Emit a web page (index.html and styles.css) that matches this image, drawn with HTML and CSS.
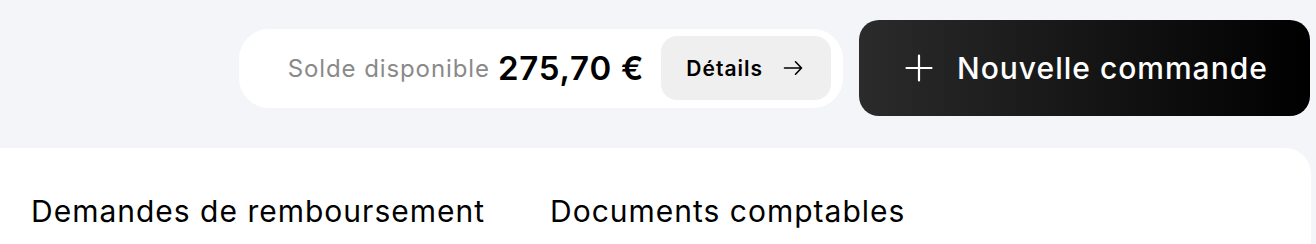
FILE: index.html
```html
<!DOCTYPE html>
<html lang="fr">
<head>
<meta charset="utf-8">
<link rel="stylesheet" href="styles.css">
</head>
<body>
<div class="page">
  <header class="topbar">
    <div class="balance">
      <span class="balance-label">Solde disponible</span>
      <span class="balance-amount">275,70 €</span>
      <button class="details-btn">Détails
        <svg class="arrow" width="20" height="20" viewBox="0 0 20 20" fill="none" stroke="currentColor" stroke-width="1.6" stroke-linecap="round" stroke-linejoin="round"><path d="M1.5 10h17M12.5 3.8l6 6.2-6 6.2"/></svg>
      </button>
    </div>
    <button class="new-order">
      <svg class="plus" width="28" height="28" viewBox="0 0 28 28" fill="none" stroke="currentColor" stroke-width="2.2" stroke-linecap="round"><path d="M14 1.5v25M1.5 14h25"/></svg>
      <span>Nouvelle commande</span>
    </button>
  </header>
  <section class="card">
    <nav class="tabs">
      <span class="tab">Demandes de remboursement</span>
      <span class="tab">Documents comptables</span>
    </nav>
  </section>
</div>
</body>
</html>
```
FILE: styles.css
```css
* { box-sizing: border-box; }
html, body { margin: 0; height: 100%; }
body {
  background: #f4f5f9;
  font-family: Inter, "Noto Sans", sans-serif;
  color: #000;
  overflow: hidden;
}
.page {
  padding: 20px 6px 0 0;
}
.topbar {
  display: flex;
  justify-content: flex-end;
  align-items: center;
  gap: 16px;
  height: 96px;
}
.balance {
  display: flex;
  align-items: center;
  height: 79px;
  background: #fff;
  border-radius: 30px;
  padding: 8px 12px 8px 49px;
}
.balance-label {
  font-size: 24px;
  color: #8a8a8a;
  letter-spacing: 0.9px;
  margin-right: 8px;
}
.balance-amount {
  font-size: 33px;
  font-weight: 600;
  letter-spacing: 0.8px;
  margin-right: 17px;
}
.details-btn {
  display: flex;
  align-items: center;
  gap: 20px;
  height: 64px;
  border: 0;
  border-radius: 16px;
  background: #efefef;
  padding: 0 28px 0 25px;
  font-family: inherit;
  font-size: 21px;
  font-weight: 600;
  letter-spacing: 1px;
  color: #000;
}
.new-order {
  display: flex;
  align-items: center;
  gap: 24px;
  height: 96px;
  width: 451px;
  padding: 0 0 0 46px;
  border: 0;
  border-radius: 20px;
  background: linear-gradient(90deg, #2b2b2b 0%, #000 100%);
  color: #fff;
  font-family: inherit;
  font-size: 30px;
  font-weight: 500;
  letter-spacing: 1px;
}
.card {
  margin-top: 32px;
  margin-right: -1px;
  background: #fff;
  border-radius: 0 26px 0 0;
  height: 96px;
}
.tabs {
  display: flex;
  gap: 65px;
  padding: 45px 0 0 31px;
}
.tab {
  font-size: 30px;
  line-height: 36px;
  letter-spacing: 1px;
}
```
